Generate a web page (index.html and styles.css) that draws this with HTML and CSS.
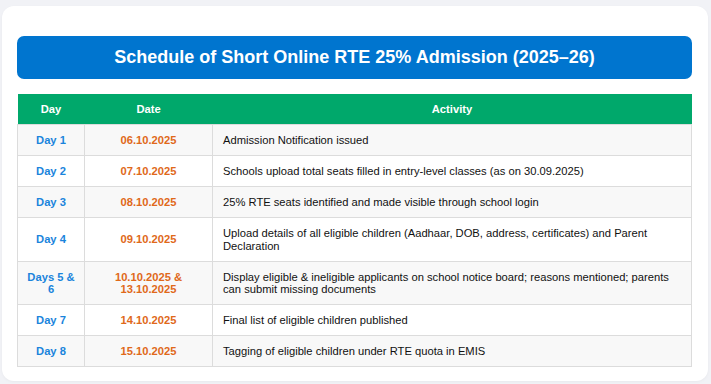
FILE: index.html
```html
<!DOCTYPE html>
<html>
<head>
<meta charset="utf-8">
<link rel="stylesheet" href="styles.css">
</head>
<body>
<div class="card">
  <h1 class="title">Schedule of Short Online RTE 25% Admission (2025–26)</h1>
  <table class="sched">
    <colgroup>
      <col class="c-day">
      <col class="c-date">
      <col class="c-act">
    </colgroup>
    <thead>
      <tr><th>Day</th><th>Date</th><th>Activity</th></tr>
    </thead>
    <tbody>
      <tr><td class="day">Day 1</td><td class="date">06.10.2025</td><td class="act">Admission Notification issued</td></tr>
      <tr><td class="day">Day 2</td><td class="date">07.10.2025</td><td class="act">Schools upload total seats filled in entry-level classes (as on 30.09.2025)</td></tr>
      <tr><td class="day">Day 3</td><td class="date">08.10.2025</td><td class="act">25% RTE seats identified and made visible through school login</td></tr>
      <tr><td class="day">Day 4</td><td class="date">09.10.2025</td><td class="act">Upload details of all eligible children (Aadhaar, DOB, address, certificates) and Parent Declaration</td></tr>
      <tr><td class="day">Days 5 &amp; 6</td><td class="date">10.10.2025 &amp; 13.10.2025</td><td class="act">Display eligible &amp; ineligible applicants on school notice board; reasons mentioned; parents can submit missing documents</td></tr>
      <tr><td class="day">Day 7</td><td class="date">14.10.2025</td><td class="act">Final list of eligible children published</td></tr>
      <tr><td class="day">Day 8</td><td class="date">15.10.2025</td><td class="act">Tagging of eligible children under RTE quota in EMIS</td></tr>
    </tbody>
  </table>
</div>
</body>
</html>
```

FILE: styles.css
```css
html, body {
  margin: 0;
  padding: 0;
  background: #f1f2f6;
  font-family: "Liberation Sans", Arial, sans-serif;
}
body {
  padding: 6px 3px 4px 2px;
}
.card {
  background: #fff;
  border-radius: 12px;
  padding: 30px 16px 14px 15px;
  box-shadow: 0 1px 3px rgba(0,0,0,0.04);
}
.title {
  margin: 0 0 15px 0;
  background: #0075cf;
  color: #fff;
  border-radius: 7px;
  height: 43px;
  display: flex;
  align-items: center;
  justify-content: center;
  font-size: 18px;
  font-weight: bold;
}
.sched {
  width: 100%;
  border-collapse: collapse;
  font-size: 11.2px;
  table-layout: fixed;
}
.c-day { width: 67px; }
.c-date { width: 128px; }
.sched th {
  background: #00a86b;
  color: #fff;
  font-weight: bold;
  height: 30px;
  padding: 0 10px;
  text-align: center;
  border: none;
}
.sched td {
  border: 1px solid #dcdcdc;
  padding: 9px 10px 8.5px;
  line-height: 12.5px;
  vertical-align: middle;
}
.sched td.day {
  padding-left: 6px;
  padding-right: 6px;
}
.sched tbody tr:nth-child(odd) td { background: #f8f8f8; }
.sched tbody tr:nth-child(even) td { background: #fff; }
.day {
  text-align: center;
  font-weight: bold;
  color: #1a84dc;
}
.date {
  text-align: center;
  font-weight: bold;
  color: #e0691a;
}
.act {
  color: #111;
}
```
